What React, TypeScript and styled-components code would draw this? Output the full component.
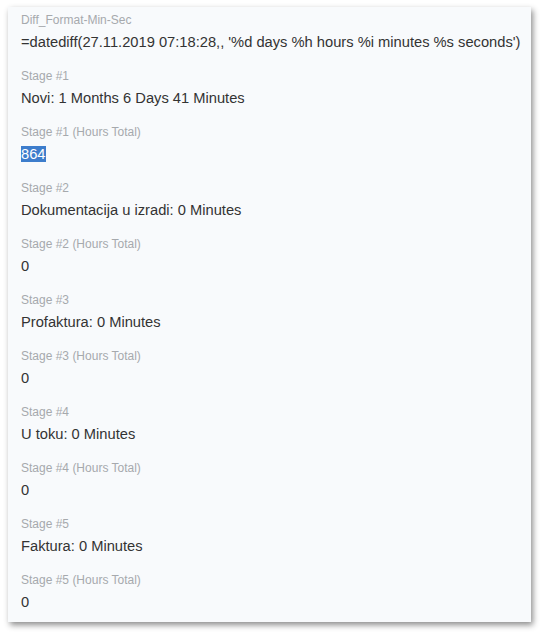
import React from 'react';
import styled, { createGlobalStyle } from 'styled-components';

const GlobalStyle = createGlobalStyle`
  body {
    margin: 0;
    background: #ffffff;
    font-family: "Liberation Sans", Arial, sans-serif;
  }
`;

const Page = styled.div`
  padding: 7px 12px 13px 8px;
`;

const Card = styled.div`
  width: 523px;
  box-sizing: border-box;
  background: #f8fafc;
  padding: 5px 13px 10px;
  box-shadow: 2px 3px 6px rgba(0, 0, 0, 0.45);
`;

const Field = styled.div`
  display: flex;
  flex-direction: column;
  gap: 4px;
  & + & {
    margin-top: 16px;
  }
`;

const Label = styled.div`
  font-size: 12px;
  line-height: 16px;
  color: #a6a9ad;
`;

const Value = styled.div`
  font-size: 14.7px;
  line-height: 20px;
  color: #333333;
  white-space: nowrap;
`;

const Selected = styled.span`
  background: #3d7dcc;
  color: #ffffff;
`;

interface Row {
  label: string;
  value: string;
  selected?: boolean;
}

const rows: Row[] = [
  { label: 'Diff_Format-Min-Sec', value: "=datediff(27.11.2019 07:18:28,, '%d days %h hours %i minutes %s seconds')" },
  { label: 'Stage #1', value: 'Novi: 1 Months 6 Days 41 Minutes' },
  { label: 'Stage #1 (Hours Total)', value: '864', selected: true },
  { label: 'Stage #2', value: 'Dokumentacija u izradi: 0 Minutes' },
  { label: 'Stage #2 (Hours Total)', value: '0' },
  { label: 'Stage #3', value: 'Profaktura: 0 Minutes' },
  { label: 'Stage #3 (Hours Total)', value: '0' },
  { label: 'Stage #4', value: 'U toku: 0 Minutes' },
  { label: 'Stage #4 (Hours Total)', value: '0' },
  { label: 'Stage #5', value: 'Faktura: 0 Minutes' },
  { label: 'Stage #5 (Hours Total)', value: '0' },
];

const App: React.FC = () => {
  return (
    <>
      <GlobalStyle />
      <Page>
        <Card>
          {rows.map((row) => (
            <Field key={row.label}>
              <Label>{row.label}</Label>
              <Value>{row.selected ? <Selected>{row.value}</Selected> : row.value}</Value>
            </Field>
          ))}
        </Card>
      </Page>
    </>
  );
};

export default App;
